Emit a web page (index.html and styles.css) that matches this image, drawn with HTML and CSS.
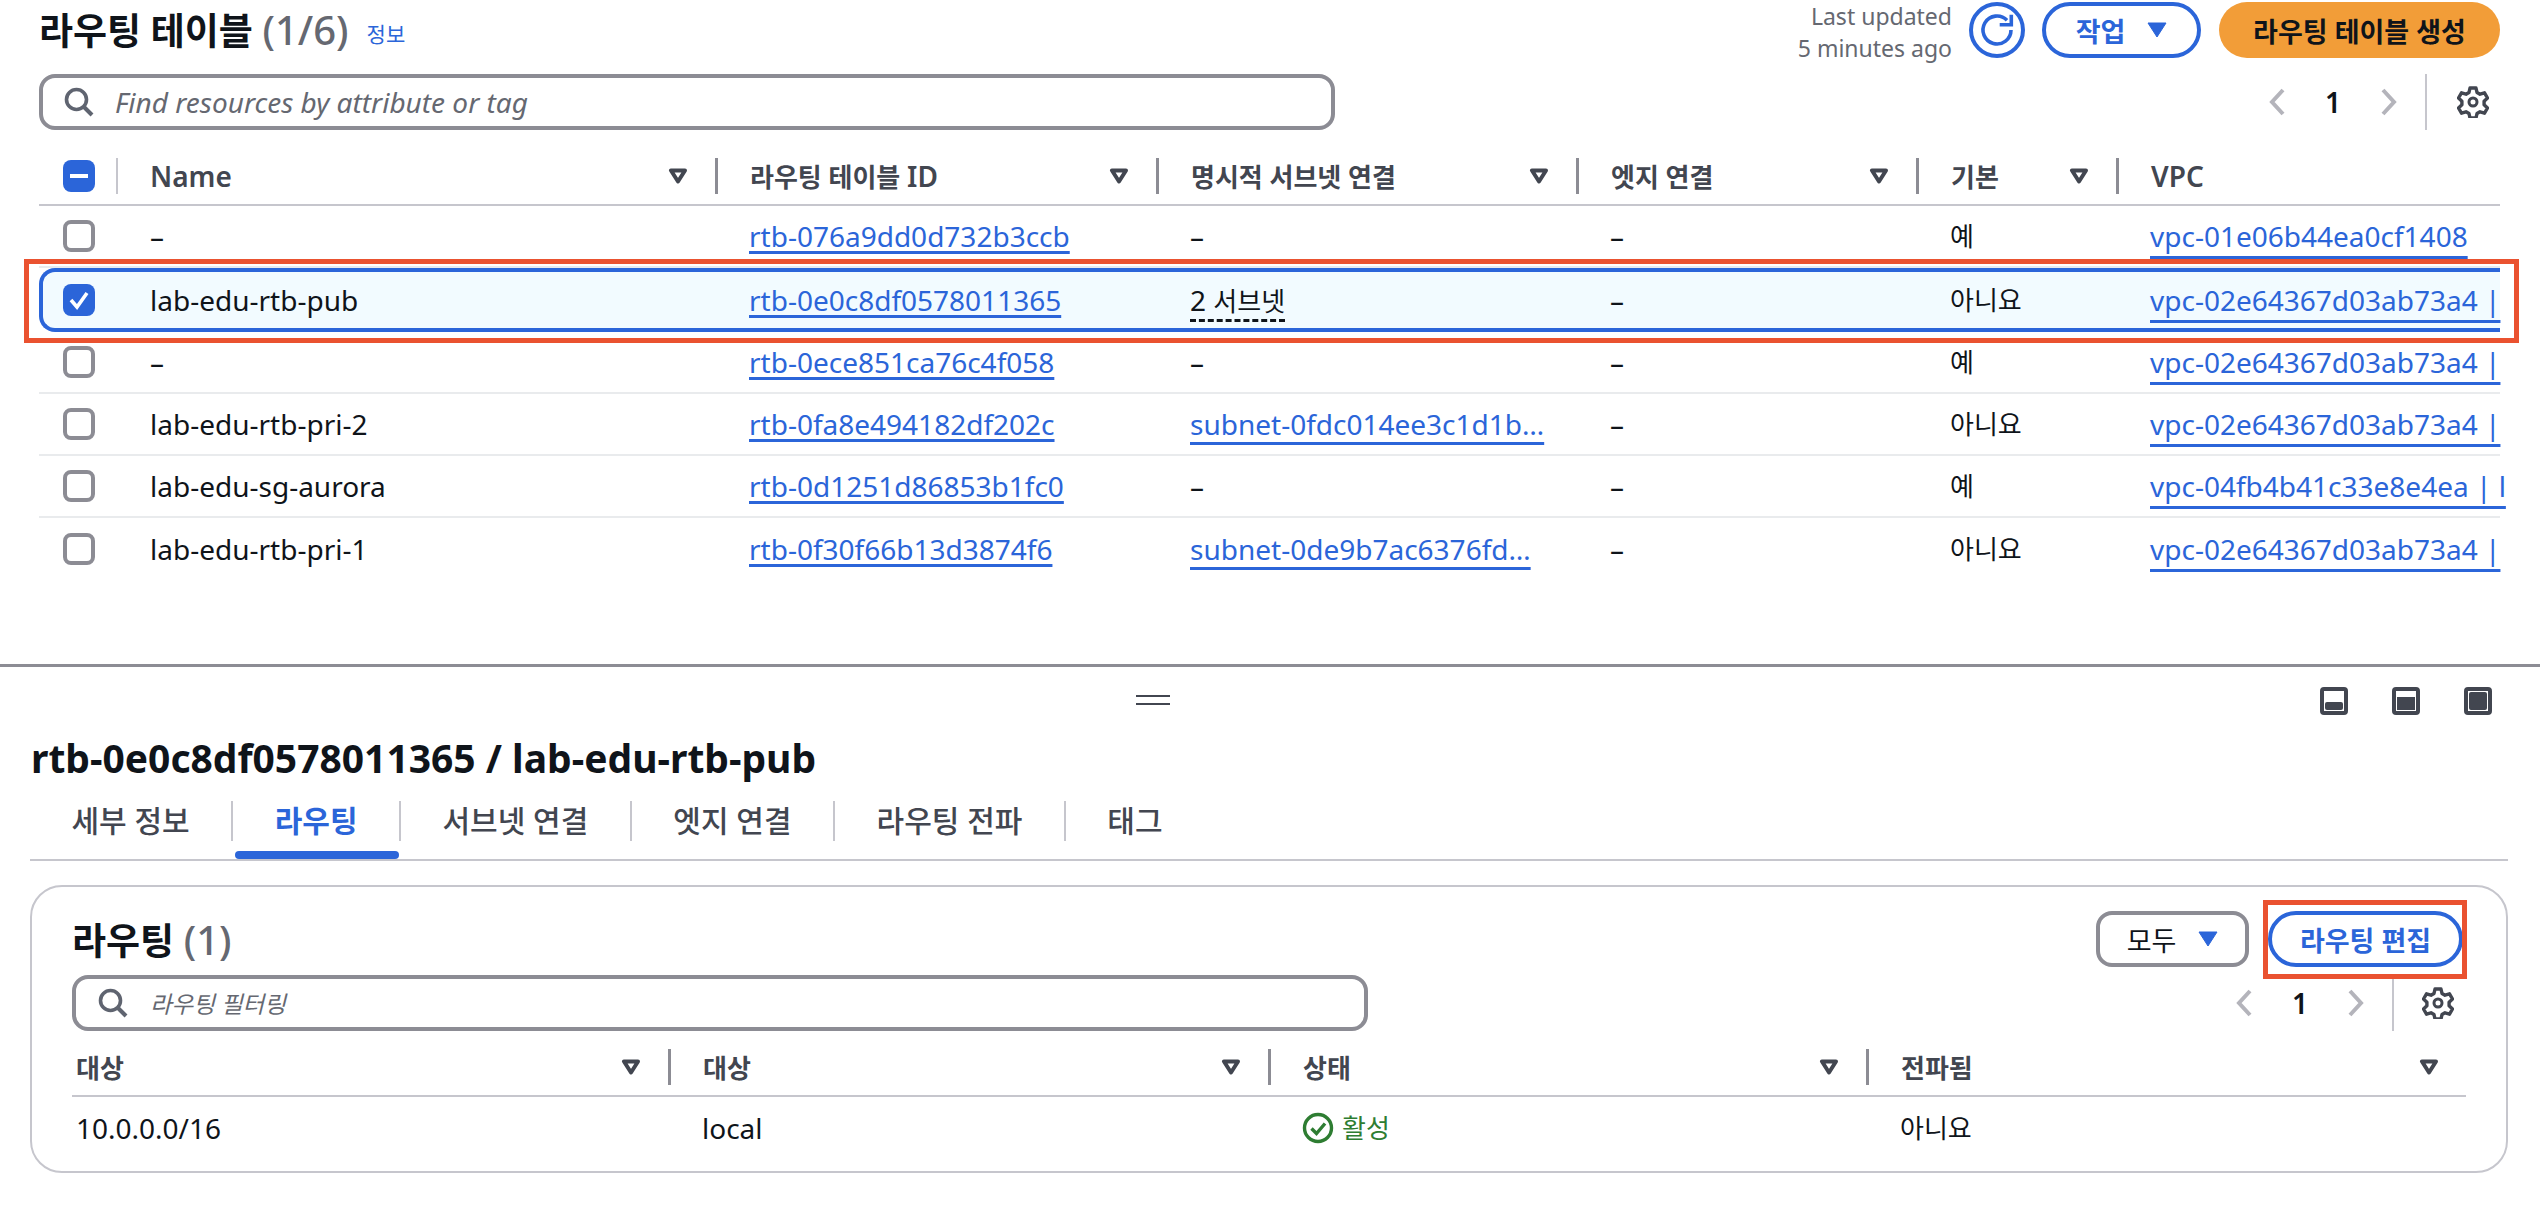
FILE: index.html
```html
<!DOCTYPE html>
<html lang="ko">
<head>
  <meta charset="UTF-8" />
  <title>라우팅 테이블</title>
  <link rel="stylesheet" href="styles.css">
</head>
<body>

<svg class="defs" width="0" height="0">
  <symbol id="sort" viewBox="0 0 20 16"><path d="M3 2.500h14L10 13.500z" fill="none" stroke="#424650" stroke-width="4" stroke-linejoin="round"/></symbol>
  <symbol id="caret" viewBox="0 0 20 16"><path d="M1 1h18L10 15z" fill="#2b65d9" stroke="#2b65d9" stroke-linejoin="round"/></symbol>
  <symbol id="search" viewBox="0 0 30 30"><circle cx="12.500" cy="12.500" r="10" fill="none" stroke="#5f6470" stroke-width="3.600"/><path d="M20 20l8 8" stroke="#5f6470" stroke-width="4"/></symbol>
  <symbol id="prev" viewBox="0 0 16 28"><path d="M14 2L3 14l11 12" fill="none" stroke="#b4b4bb" stroke-width="4"/></symbol>
  <symbol id="next" viewBox="0 0 16 28"><path d="M2 2l11 12L2 26" fill="none" stroke="#b4b4bb" stroke-width="4"/></symbol>
  <symbol id="gear" viewBox="0 0 32 32"><path d="M13 2h6l1 4.500 3 1.700 4.500-1.400 3 5.200-3.400 3.200v3.600l3.400 3.200-3 5.200-4.500-1.400-3 1.700-1 4.500h-6l-1-4.500-3-1.700-4.500 1.400-3-5.200 3.400-3.200v-3.600L1.500 12l3-5.200L9 8.200l3-1.700z" fill="none" stroke="#424650" stroke-width="3.400" stroke-linejoin="round"/><circle cx="16" cy="16" r="4" fill="none" stroke="#424650" stroke-width="3"/></symbol>
</svg>

<section class="top">
  <div class="title-row">
    <h1 class="title">라우팅 테이블 <span class="count">(1/6)</span></h1>
    <a class="info">정보</a>
    <div class="updated">Last updated<br>5 minutes ago</div>
    <button class="btn-round">
      <svg width="48" height="48" viewBox="0 0 48 48"><path d="M34 14.200A14 14 0 1 0 38 24" fill="none" stroke="#2b65d9" stroke-width="3.600"/><path d="M38.300 8.700v10H26.700" fill="none" stroke="#2b65d9" stroke-width="3.600"/></svg>
    </button>
    <button class="btn btn-act">작업 <svg class="caret" width="20" height="16"><use href="#caret"/></svg></button>
    <button class="btn btn-primary">라우팅 테이블 생성</button>
  </div>

  <div class="tools-row">
    <div class="search search-top">
      <svg width="30" height="30"><use href="#search"/></svg>
      <span>Find resources by attribute or tag</span>
    </div>
    <div class="pager">
      <span class="pg"><svg width="16" height="28"><use href="#prev"/></svg></span>
      <span class="pg num">1</span>
      <span class="pg"><svg width="16" height="28"><use href="#next"/></svg></span>
      <span class="pg-sep"></span>
      <svg class="pg-gear" width="32" height="32"><use href="#gear"/></svg>
    </div>
  </div>

  <div class="grid grid-top head">
    <div class="th th-check"><span class="check partial"><i></i></span></div>
    <div class="th th-first"><span class="lat">Name</span><svg width="20" height="16"><use href="#sort"/></svg></div>
    <div class="th"><span>라우팅 테이블 <span class="lat">ID</span></span><svg width="20" height="16"><use href="#sort"/></svg></div>
    <div class="th">명시적 서브넷 연결<svg width="20" height="16"><use href="#sort"/></svg></div>
    <div class="th">엣지 연결<svg width="20" height="16"><use href="#sort"/></svg></div>
    <div class="th">기본<svg width="20" height="16"><use href="#sort"/></svg></div>
    <div class="th"><span class="lat">VPC</span></div>
  </div>

  <div class="grid grid-top row">
    <div class="td td-check"><span class="check"></span></div>
    <div class="td">–</div>
    <div class="td"><a>rtb-076a9dd0d732b3ccb</a></div>
    <div class="td">–</div>
    <div class="td">–</div>
    <div class="td ko">예</div>
    <div class="td"><a class="vpc">vpc-01e06b44ea0cf1408</a></div>
  </div>
  <div class="grid grid-top row selected">
    <div class="td td-check"><span class="check on"><svg width="32" height="32" viewBox="0 0 32 32"><path d="M8 16l6 7 10-14" fill="none" stroke="#fff" stroke-width="3.600"/></svg></span></div>
    <div class="td">lab-edu-rtb-pub</div>
    <div class="td"><a>rtb-0e0c8df0578011365</a></div>
    <div class="td"><span class="dashed">2 <span class="ko">서브넷</span></span></div>
    <div class="td">–</div>
    <div class="td ko">아니요</div>
    <div class="td"><a class="vpc">vpc-02e64367d03ab73a4 |</a></div>
  </div>
  <div class="grid grid-top row">
    <div class="td td-check"><span class="check"></span></div>
    <div class="td">–</div>
    <div class="td"><a>rtb-0ece851ca76c4f058</a></div>
    <div class="td">–</div>
    <div class="td">–</div>
    <div class="td ko">예</div>
    <div class="td"><a class="vpc">vpc-02e64367d03ab73a4 |</a></div>
  </div>
  <div class="grid grid-top row">
    <div class="td td-check"><span class="check"></span></div>
    <div class="td">lab-edu-rtb-pri-2</div>
    <div class="td"><a>rtb-0fa8e494182df202c</a></div>
    <div class="td"><a class="subnet">subnet-0fdc014ee3c1d1b…</a></div>
    <div class="td">–</div>
    <div class="td ko">아니요</div>
    <div class="td"><a class="vpc">vpc-02e64367d03ab73a4 |</a></div>
  </div>
  <div class="grid grid-top row">
    <div class="td td-check"><span class="check"></span></div>
    <div class="td">lab-edu-sg-aurora</div>
    <div class="td"><a>rtb-0d1251d86853b1fc0</a></div>
    <div class="td">–</div>
    <div class="td">–</div>
    <div class="td ko">예</div>
    <div class="td"><a class="vpc">vpc-04fb4b41c33e8e4ea | l</a></div>
  </div>
  <div class="grid grid-top row last">
    <div class="td td-check"><span class="check"></span></div>
    <div class="td">lab-edu-rtb-pri-1</div>
    <div class="td"><a>rtb-0f30f66b13d3874f6</a></div>
    <div class="td"><a class="subnet">subnet-0de9b7ac6376fd…</a></div>
    <div class="td">–</div>
    <div class="td ko">아니요</div>
    <div class="td"><a class="vpc">vpc-02e64367d03ab73a4 |</a></div>
  </div>
</section>

<section class="bottom">
  <div class="split-bar">
    <span class="handle"></span>
    <div class="split-icons">
      <svg width="28" height="28" viewBox="0 0 28 28"><rect x="2" y="2" width="24" height="24" rx="2" fill="none" stroke="#424650" stroke-width="4"/><rect x="5" y="15" width="18" height="8" rx="2" fill="#424650"/></svg>
      <svg width="28" height="28" viewBox="0 0 28 28"><rect x="2" y="2" width="24" height="24" rx="2" fill="none" stroke="#424650" stroke-width="4"/><rect x="5" y="10" width="18" height="13" fill="#424650"/></svg>
      <svg width="28" height="28" viewBox="0 0 28 28"><rect x="2" y="2" width="24" height="24" rx="2" fill="none" stroke="#424650" stroke-width="4"/><rect x="5" y="5" width="18" height="18" rx="2" fill="#424650"/></svg>
    </div>
  </div>

  <h2 class="detail-title">rtb-0e0c8df0578011365 / lab-edu-rtb-pub</h2>

  <div class="tabs">
    <span class="tab">세부 정보</span>
    <span class="tab active">라우팅</span>
    <span class="tab">서브넷 연결</span>
    <span class="tab">엣지 연결</span>
    <span class="tab">라우팅 전파</span>
    <span class="tab">태그</span>
  </div>

  <div class="panel">
    <div class="panel-head">
      <h3 class="panel-title">라우팅 <span class="count">(1)</span></h3>
      <button class="btn btn-select">모두 <svg class="caret" width="20" height="16"><use href="#caret"/></svg></button>
      <button class="btn btn-edit">라우팅 편집</button>
    </div>
    <div class="tools-row tools-panel">
      <div class="search search-panel">
        <svg width="30" height="30"><use href="#search"/></svg>
        <span>라우팅 필터링</span>
      </div>
      <div class="pager">
        <span class="pg"><svg width="16" height="28"><use href="#prev"/></svg></span>
        <span class="pg num">1</span>
        <span class="pg"><svg width="16" height="28"><use href="#next"/></svg></span>
        <span class="pg-sep"></span>
        <svg class="pg-gear" width="32" height="32"><use href="#gear"/></svg>
      </div>
    </div>
    <div class="grid grid-routes head">
      <div class="th th-plain">대상<svg width="20" height="16"><use href="#sort"/></svg></div>
      <div class="th">대상<svg width="20" height="16"><use href="#sort"/></svg></div>
      <div class="th">상태<svg width="20" height="16"><use href="#sort"/></svg></div>
      <div class="th">전파됨<svg width="20" height="16"><use href="#sort"/></svg></div>
    </div>
    <div class="grid grid-routes row last">
      <div class="td td-plain">10.0.0.0/16</div>
      <div class="td">local</div>
      <div class="td ko status">
        <svg width="32" height="32" viewBox="0 0 32 32"><circle cx="16" cy="16" r="13.500" fill="none" stroke="#2e7d32" stroke-width="3.400"/><path d="M9.500 16.500l5 5 8.500-10" fill="none" stroke="#2e7d32" stroke-width="3.400"/></svg>
        활성
      </div>
      <div class="td ko">아니요</div>
    </div>
  </div>
</section>

<div class="mark mark-row"></div>
<div class="mark mark-btn"></div>

</body>
</html>
```

FILE: styles.css
```css
body {
  margin: 0;
  background: #fff;
  color: #0f141a;
  font-family: "Noto Sans", "Noto Sans CJK KR", sans-serif;
  font-size: 28px;
  height: 1228px;
  overflow: hidden;
}
.defs {
  position: absolute;
}
a {
  color: #2b65d9;
  text-decoration: underline;
  text-decoration-thickness: 3px;
  text-underline-offset: 4px;
  text-decoration-skip-ink: none;
}
a.subnet {
  text-underline-offset: 7px;
}
a.vpc {
  text-underline-offset: 9px;
}
.ko {
  font-size: 26px;
}

/* top pane */
.top {
  padding: 2px 40px 0 39px;
  box-sizing: border-box;
  border-bottom: 3px solid #8c8c94;
  height: 667px;
}
.title-row {
  display: flex;
  align-items: center;
  height: 56px;
}
.title {
  margin: 0;
  font-size: 37px;
  font-weight: 700;
  line-height: 56px;
}
.count {
  font-weight: 500;
  font-size: 40px;
  color: #656871;
}
.info {
  font-size: 21px;
  margin: 6px 0 0 18px;
  text-decoration: none;
}
.updated {
  margin-left: auto;
  padding-top: 4px;
  text-align: right;
  font-size: 23px;
  line-height: 32px;
  color: #656871;
}
button {
  font-family: inherit;
  font-size: 27px;
  background: #fff;
  padding: 0;
}
.btn-round {
  width: 56px;
  height: 56px;
  margin-left: 17px;
  border: 4px solid #2b65d9;
  border-radius: 50%;
  display: flex;
  align-items: center;
  justify-content: center;
}
.btn {
  height: 56px;
  display: flex;
  align-items: center;
  justify-content: center;
  gap: 22px;
  font-weight: 700;
}
.btn-act {
  width: 159px;
  margin-left: 17px;
  border: 4px solid #2b65d9;
  border-radius: 28px;
  color: #2b65d9;
}
.btn-primary {
  width: 281px;
  margin-left: 18px;
  border: none;
  border-radius: 28px;
  background: #f29d38;
  color: #0f141a;
}
.tools-row {
  display: flex;
  justify-content: space-between;
  margin-top: 16px;
}
.search {
  height: 56px;
  box-sizing: border-box;
  border: 4px solid #8c8c94;
  border-radius: 16px;
  display: flex;
  align-items: center;
  font-style: italic;
  color: #656871;
}
.search-top {
  width: 1296px;
  padding-left: 21px;
  gap: 21px;
}
.search-panel {
  width: 1296px;
  padding-left: 22px;
  gap: 22px;
  font-size: 23.500px;
}
.pager {
  display: flex;
  align-items: center;
  height: 56px;
  padding-right: 11px;
}
.pg {
  width: 56px;
  display: flex;
  justify-content: center;
}
.num {
  font-weight: 600;
}
.pg-sep {
  width: 2px;
  height: 56px;
  margin-left: 8px;
  background: #c6c6cd;
}
.pg-gear {
  margin-left: 30px;
}
.tools-panel .pg-gear {
  margin-left: 28px;
}

/* tables */
.grid {
  display: grid;
}
.grid-top {
  grid-template-columns: 77px 599px 441px 420px 340px 200px 384px;
}
.grid-routes {
  grid-template-columns: 596px 600px 598px 600px;
}
.head {
  margin-top: 28px;
  padding-bottom: 10px;
  border-bottom: 2px solid #c6c6cd;
  height: 36px;
}
.th {
  display: flex;
  align-items: center;
  justify-content: space-between;
  height: 36px;
  padding: 0 27px 0 32px;
  border-left: 3px solid #8c8c94;
  font-size: 26px;
  font-weight: 700;
  color: #424650;
  white-space: nowrap;
}
.lat {
  font-size: 28px;
  font-weight: 600;
}
.th-check {
  border-left: none;
  padding: 0 0 0 24px;
  justify-content: flex-start;
}
.th-first {
  border-left: 2px solid #c6c6cd;
  padding-left: 32px;
}
.th-plain {
  border-left: none;
  padding-left: 4px;
}
.row {
  height: 62px;
  box-sizing: border-box;
  border-bottom: 2px solid #e9ebed;
  align-items: center;
}
.row.last {
  border-bottom: none;
}
.row.selected {
  height: 64px;
  background: #f2fbff;
  border: 4px solid #2b65d9;
  border-width: 4px 0 4px 4px;
  border-radius: 16px 0 0 16px;
  grid-template-columns: 73px 599px 441px 420px 340px 200px 384px;
}
.selected .td-check {
  padding-left: 20px;
}
.td {
  padding-left: 34px;
  white-space: nowrap;
  overflow: hidden;
  line-height: 44px;
}
.td:last-child {
  overflow: visible;
}
.td-check {
  padding-left: 24px;
  display: flex;
}
.td-plain {
  padding-left: 4px;
}
.check {
  display: block;
  width: 32px;
  height: 32px;
  box-sizing: border-box;
  border: 4px solid #8c8c94;
  border-radius: 8px;
}
.check.on,
.check.partial {
  border: none;
  background: #2b65d9;
  display: flex;
  align-items: center;
  justify-content: center;
}
.check.partial i {
  width: 18px;
  height: 4px;
  background: #fff;
}
.dashed {
  border-bottom: 3px dashed #0f141a;
}

/* bottom pane */
.split-bar {
  display: flex;
  align-items: flex-start;
  padding: 20px 48px 0 1136px;
  height: 28px;
}
.handle {
  width: 34px;
  height: 6px;
  margin-top: 8px;
  border-top: 2px solid #424650;
  border-bottom: 2px solid #424650;
}
.split-icons {
  margin-left: auto;
  display: flex;
  gap: 44px;
}
.detail-title {
  margin: 19px 0 0 31px;
  font-size: 39px;
  line-height: 48px;
  font-weight: 700;
}
.tabs {
  display: flex;
  margin: 19px 32px 0 30px;
  height: 58px;
  border-bottom: 2px solid #c6c6cd;
}
.tab {
  height: 40px;
  line-height: 40px;
  padding: 0 41.500px;
  border-left: 2px solid #c6c6cd;
  font-size: 30px;
  color: #424650;
  font-weight: 500;
  position: relative;
}
.tab:first-child {
  border-left: none;
}
.tab.active {
  color: #2b65d9;
  font-weight: 700;
}
.tab.active::after {
  content: "";
  position: absolute;
  left: 2px;
  right: 0;
  top: 50px;
  height: 8px;
  background: #2b65d9;
  border-radius: 4px;
}
.panel {
  margin: 24px 32px 0 30px;
  height: 288px;
  box-sizing: border-box;
  border: 2px solid #c6c6cd;
  border-radius: 32px;
  padding: 24px 40px 0 40px;
}
.panel-head {
  display: flex;
  align-items: center;
  height: 56px;
}
.panel-title {
  margin: 0 auto 0 0;
  font-size: 37px;
  font-weight: 700;
}
.btn-select {
  width: 153px;
  border: 4px solid #8c8c94;
  border-radius: 16px;
  color: #0f141a;
  font-weight: 400;
}
.btn-edit {
  width: 195px;
  margin: 0 3px 0 19px;
  border: 4px solid #2b65d9;
  border-radius: 28px;
  color: #2b65d9;
}
.tools-panel {
  margin-top: 8px;
}
.tools-panel .pager {
  padding-right: 12px;
}
.grid-routes.head {
  margin-top: 18px;
}
.status {
  color: #2e7d32;
  display: flex;
  align-items: center;
  gap: 8px;
}

/* red annotation boxes */
.mark {
  position: absolute;
  border: 5px solid #ea5230;
  box-sizing: border-box;
}
.mark-row {
  left: 24px;
  top: 259px;
  width: 2495px;
  height: 84px;
}
.mark-btn {
  left: 2263px;
  top: 900px;
  width: 204px;
  height: 79px;
}
```
